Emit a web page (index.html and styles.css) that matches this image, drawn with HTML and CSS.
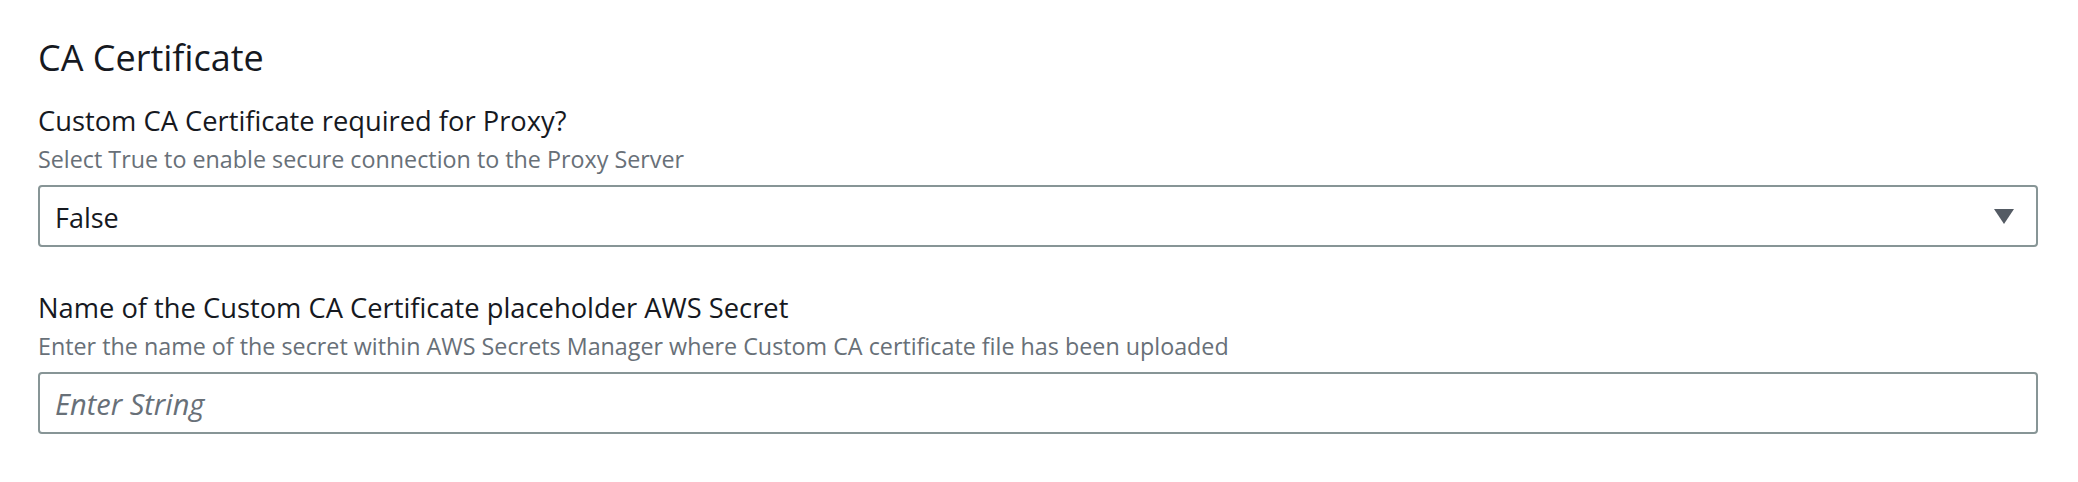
FILE: index.html
```html
<!DOCTYPE html>
<html lang="en">
<head>
<meta charset="utf-8">
<title>CA Certificate</title>
<link rel="stylesheet" href="styles.css">
</head>
<body>
<section class="panel">
  <h2 class="panel-title">CA Certificate</h2>
  <div class="field">
    <label class="field-label" for="ca-required">Custom CA Certificate required for Proxy?</label>
    <div class="field-desc">Select True to enable secure connection to the Proxy Server</div>
    <div class="select" id="ca-required" role="combobox" aria-expanded="false">
      <span class="select-value">False</span>
      <svg class="select-caret" width="20" height="15" viewBox="0 0 20 15" aria-hidden="true"><polygon points="0,0 20,0 10,15" fill="#545b64"/></svg>
    </div>
  </div>
  <div class="field field-next">
    <label class="field-label" for="ca-secret">Name of the Custom CA Certificate placeholder AWS Secret</label>
    <div class="field-desc">Enter the name of the secret within AWS Secrets Manager where Custom CA certificate file has been uploaded</div>
    <input class="text-input" id="ca-secret" type="text" placeholder="Enter String">
  </div>
</section>
</body>
</html>
```
FILE: styles.css
```css
html, body {
  margin: 0;
  padding: 0;
  background: #ffffff;
}
body {
  font-family: "Open Sans", "Noto Sans", sans-serif;
  color: #16191f;
}
.panel {
  padding: 36px 40px 0 38px;
  display: flex;
  flex-direction: column;
}
.panel-title {
  margin: 0;
  font-size: 36px;
  line-height: 44px;
  font-weight: 400;
  color: #16191f;
}
.field {
  display: flex;
  flex-direction: column;
  margin-top: 22px;
}
.field-next {
  margin-top: 42px;
}
.field-label {
  font-size: 27.3px;
  line-height: 38px;
  color: #16191f;
}
.field-desc {
  margin-top: 2px;
  font-size: 23.3px;
  line-height: 34px;
  color: #687078;
}
.select,
.text-input {
  margin-top: 9px;
  box-sizing: border-box;
  width: 100%;
  height: 62px;
  border: 2px solid #879596;
  border-radius: 4px;
  background: #ffffff;
}
.select {
  display: flex;
  align-items: center;
  justify-content: space-between;
  padding: 2px 22px 0 15px;
}
.select-value {
  font-size: 27px;
  color: #16191f;
}
.select-caret {
  display: block;
  margin-top: -2px;
}
.text-input {
  display: block;
  padding: 0 15px;
  font-family: "Open Sans", "Noto Sans", sans-serif;
  font-size: 29px;
  color: #16191f;
  outline: none;
}
.text-input::placeholder {
  font-style: italic;
  color: #687078;
  opacity: 1;
}
```
